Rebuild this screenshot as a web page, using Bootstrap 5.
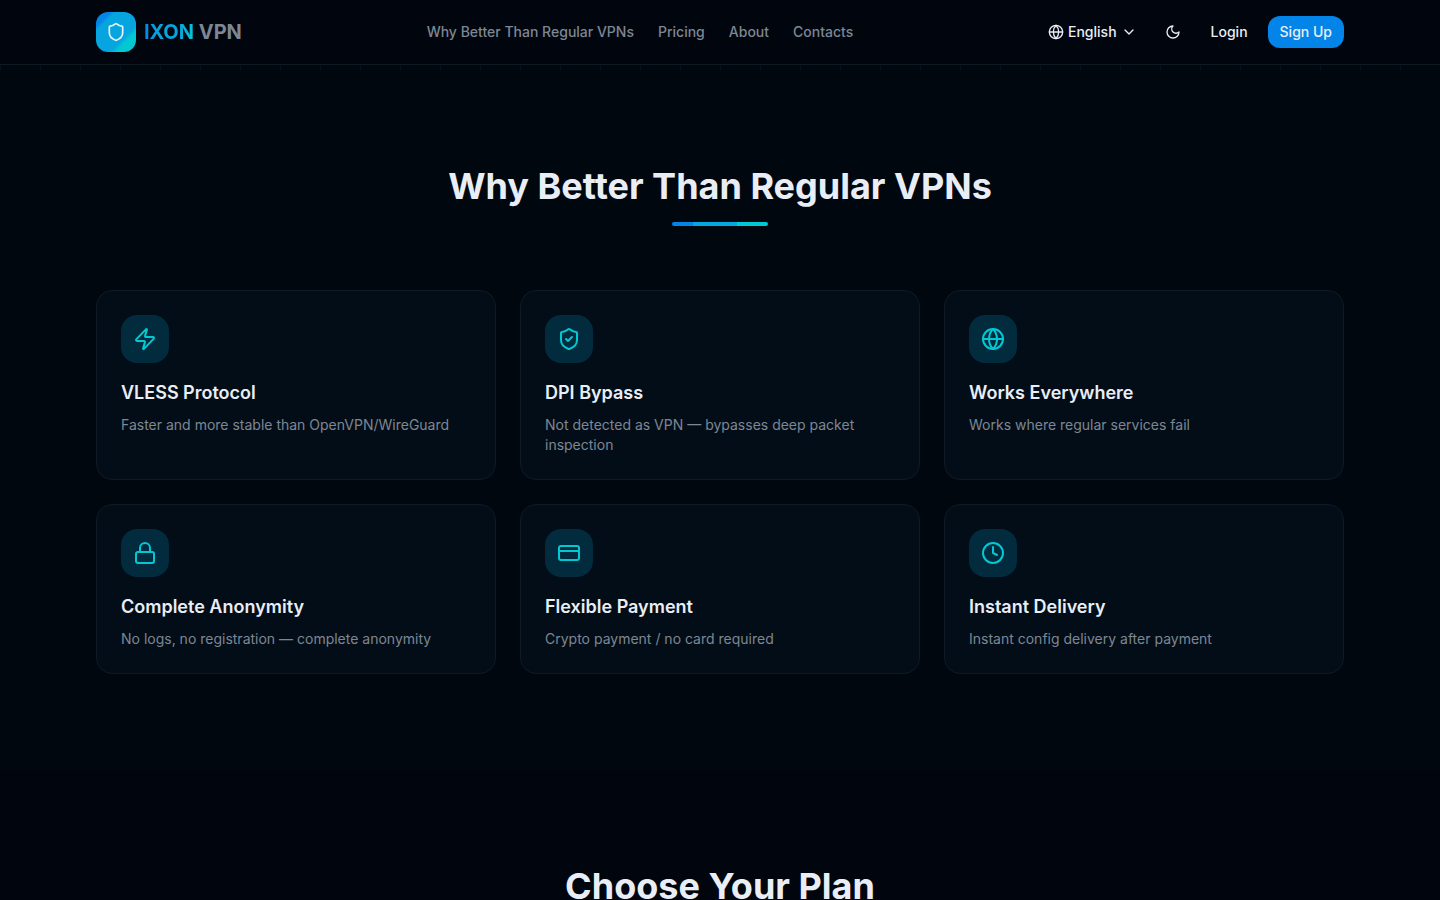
<!DOCTYPE html>
<html lang="en" data-bs-theme="dark">
<head>
<meta charset="utf-8">
<meta name="viewport" content="width=device-width, initial-scale=1">
<title>IXON VPN</title>
<link href="https://cdn.jsdelivr.net/npm/bootstrap@5.3.0/dist/css/bootstrap.min.css" rel="stylesheet">
<style>
  :root {
    --ink: #e9eef6;
    --muted: #7d8794;
    --brand: #0284e8;
    --sky: #06a5e0;
    --teal: #02c8d4;
  }
  body { font-family: Inter, "Liberation Sans", sans-serif; font-size: 14px; line-height: 20px; background: #01050d; color: var(--ink); }
  h2, h3 { color: var(--ink); }
  .shell { max-width: 1280px; padding-left: 16px; padding-right: 16px; }
  .ico { fill: none; stroke: currentColor; stroke-width: 2; stroke-linecap: round; stroke-linejoin: round; flex-shrink: 0; }

  .site-bar { background: #01050d; border-bottom: 1px solid #0d1a24; }
  .site-bar .shell { min-height: 64px; }
  .logo-tile { width: 40px; height: 40px; border-radius: 12px; color: #e9f6fc; background: linear-gradient(135deg, var(--brand) 0 18%, var(--sky) 24% 67%, var(--teal) 75%); }
  .logo-name { font-size: 20px; line-height: 28px; font-weight: 700; color: var(--muted); }
  .logo-name span { background: linear-gradient(90deg, var(--brand), var(--sky) 25% 70%, var(--teal)); -webkit-background-clip: text; background-clip: text; color: transparent; }
  .menu-link { color: var(--muted); font-weight: 500; text-decoration: none; }
  .menu-link:hover { color: var(--ink); }
  .ctl { --bs-btn-color: var(--ink); --bs-btn-hover-color: #fff; --bs-btn-font-size: 14px; --bs-btn-font-weight: 500; --bs-btn-line-height: 20px; --bs-btn-border-width: 0; --bs-btn-border-radius: 12px; --bs-btn-padding-x: 12px; --bs-btn-padding-y: 6px; }
  .ctl-lang { --bs-btn-padding-x: 10px; }
  .ctl-square { width: 36px; height: 32px; }
  .ctl-solid { --bs-btn-bg: var(--brand); --bs-btn-hover-bg: #0a76cb; }

  .hero-end { height: 5px; background: repeating-linear-gradient(90deg, #04101a 0 1px, #01070f 1px 40px); }
  .block { padding-top: 96px; padding-bottom: 96px; }
  .block-tint { background: #01070f; }
  .block-title { font-size: 36px; line-height: 40px; font-weight: 700; margin: 0; }
  .rule { width: 96px; height: 4px; border-radius: 4px; margin: 16px auto 64px; background: linear-gradient(90deg, var(--brand) 22%, var(--sky) 22% 68%, var(--teal) 68%); }
  .feature { background: #030d17; border: 1px solid #0e1a25; border-radius: 16px; padding: 24px; }
  .feature-icon { width: 48px; height: 48px; border-radius: 16px; background: #022c3e; color: var(--teal); margin-bottom: 16px; }
  .feature h3 { font-size: 18px; line-height: 28px; font-weight: 600; margin-bottom: 8px; }
  .feature p { color: var(--muted); margin: 0; }
</style>
</head>
<body>
<header class="site-bar sticky-top">
  <div class="shell container-fluid d-flex align-items-center justify-content-between">
    <a href="#" class="d-flex align-items-center gap-2 text-decoration-none">
      <span class="logo-tile d-flex align-items-center justify-content-center">
        <svg class="ico" width="20" height="20" viewBox="0 0 24 24" aria-hidden="true"><path d="M20 13c0 5-3.500 7.500-7.660 8.950a1 1 0 0 1-.67-.01C7.500 20.500 4 18 4 13V6a1 1 0 0 1 1-1c2 0 4.500-1.200 6.240-2.720a1.170 1.170 0 0 1 1.520 0C14.510 3.810 17 5 19 5a1 1 0 0 1 1 1z"/></svg>
      </span>
      <span class="logo-name"><span>IXON</span> VPN</span>
    </a>
    <nav class="d-none d-lg-flex align-items-center gap-4" aria-label="Main">
      <a class="menu-link" href="#features">Why Better Than Regular VPNs</a>
      <a class="menu-link" href="#pricing">Pricing</a>
      <a class="menu-link" href="#about">About</a>
      <a class="menu-link" href="#contacts">Contacts</a>
    </nav>
    <div class="d-flex align-items-center gap-2">
      <button type="button" class="btn ctl ctl-lang d-flex align-items-center gap-1">
        <svg class="ico" width="16" height="16" viewBox="0 0 24 24" aria-hidden="true"><circle cx="12" cy="12" r="10"/><path d="M12 2a14.500 14.500 0 0 0 0 20 14.500 14.500 0 0 0 0-20M2 12h20"/></svg>
        English
        <svg class="ico" width="16" height="16" viewBox="0 0 24 24" aria-hidden="true"><path d="m6 9 6 6 6-6"/></svg>
      </button>
      <button type="button" class="btn ctl ctl-square p-0 d-flex align-items-center justify-content-center" aria-label="Toggle theme">
        <svg class="ico" width="16" height="16" viewBox="0 0 24 24" aria-hidden="true"><path d="M12 3a6 6 0 0 0 9 9 9 9 0 1 1-9-9Z"/></svg>
      </button>
      <a href="#login" class="btn ctl">Login</a>
      <a href="#signup" class="btn ctl ctl-solid">Sign Up</a>
    </div>
  </div>
</header>

<main>
  <div class="hero-end"></div>
  <section id="features" class="block block-tint">
    <div class="shell container-fluid">
      <h2 class="block-title text-center">Why Better Than Regular VPNs</h2>
      <div class="rule"></div>
      <div class="row row-cols-1 row-cols-md-2 row-cols-lg-3 g-4">
        <div class="col"><article class="feature h-100">
          <div class="feature-icon d-flex align-items-center justify-content-center"><svg class="ico" width="24" height="24" viewBox="0 0 24 24" aria-hidden="true"><path d="M4 14a1 1 0 0 1-.78-1.630l9.900-10.200a.5.5 0 0 1 .86.460l-1.920 6.020A1 1 0 0 0 13 10h7a1 1 0 0 1 .78 1.630l-9.900 10.200a.5.5 0 0 1-.86-.46l1.920-6.020A1 1 0 0 0 11 14z"/></svg></div>
          <h3>VLESS Protocol</h3>
          <p>Faster and more stable than OpenVPN/WireGuard</p>
        </article></div>
        <div class="col"><article class="feature h-100">
          <div class="feature-icon d-flex align-items-center justify-content-center"><svg class="ico" width="24" height="24" viewBox="0 0 24 24" aria-hidden="true"><path d="M20 13c0 5-3.500 7.500-7.660 8.950a1 1 0 0 1-.67-.01C7.500 20.500 4 18 4 13V6a1 1 0 0 1 1-1c2 0 4.500-1.200 6.240-2.720a1.170 1.170 0 0 1 1.520 0C14.510 3.810 17 5 19 5a1 1 0 0 1 1 1z"/><path d="m9 12 2 2 4-4"/></svg></div>
          <h3>DPI Bypass</h3>
          <p>Not detected as VPN — bypasses deep packet inspection</p>
        </article></div>
        <div class="col"><article class="feature h-100">
          <div class="feature-icon d-flex align-items-center justify-content-center"><svg class="ico" width="24" height="24" viewBox="0 0 24 24" aria-hidden="true"><circle cx="12" cy="12" r="10"/><path d="M12 2a14.500 14.500 0 0 0 0 20 14.500 14.500 0 0 0 0-20M2 12h20"/></svg></div>
          <h3>Works Everywhere</h3>
          <p>Works where regular services fail</p>
        </article></div>
        <div class="col"><article class="feature h-100">
          <div class="feature-icon d-flex align-items-center justify-content-center"><svg class="ico" width="24" height="24" viewBox="0 0 24 24" aria-hidden="true"><rect x="3" y="11" width="18" height="11" rx="2"/><path d="M7 11V7a5 5 0 0 1 10 0v4"/></svg></div>
          <h3>Complete Anonymity</h3>
          <p>No logs, no registration — complete anonymity</p>
        </article></div>
        <div class="col"><article class="feature h-100">
          <div class="feature-icon d-flex align-items-center justify-content-center"><svg class="ico" width="24" height="24" viewBox="0 0 24 24" aria-hidden="true"><rect x="2" y="5" width="20" height="14" rx="2"/><path d="M2 10h20"/></svg></div>
          <h3>Flexible Payment</h3>
          <p>Crypto payment / no card required</p>
        </article></div>
        <div class="col"><article class="feature h-100">
          <div class="feature-icon d-flex align-items-center justify-content-center"><svg class="ico" width="24" height="24" viewBox="0 0 24 24" aria-hidden="true"><circle cx="12" cy="12" r="10"/><path d="M12 6v6l4 2"/></svg></div>
          <h3>Instant Delivery</h3>
          <p>Instant config delivery after payment</p>
        </article></div>
      </div>
    </div>
  </section>
  <section id="pricing" class="block">
    <div class="shell container-fluid">
      <h2 class="block-title text-center">Choose Your Plan</h2>
    </div>
  </section>
</main>
<script src="https://cdn.jsdelivr.net/npm/bootstrap@5.3.0/dist/js/bootstrap.bundle.min.js"></script>
</body>
</html>
